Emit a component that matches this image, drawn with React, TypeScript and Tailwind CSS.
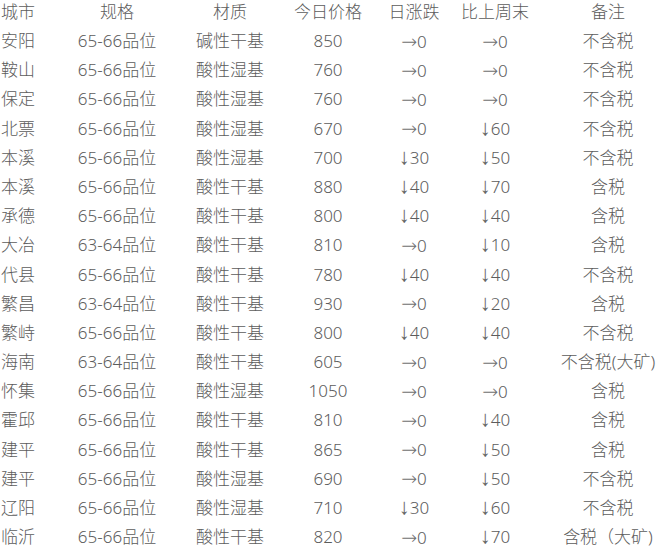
import React from "react";

type Row = [string, string, string, string, string, string, string];

const rows: Row[] = [
  ["城市", "规格", "材质", "今日价格", "日涨跌", "比上周末", "备注"],
  ["安阳", "65-66品位", "碱性干基", "850", "→0", "→0", "不含税"],
  ["鞍山", "65-66品位", "酸性湿基", "760", "→0", "→0", "不含税"],
  ["保定", "65-66品位", "酸性湿基", "760", "→0", "→0", "不含税"],
  ["北票", "65-66品位", "酸性湿基", "670", "→0", "↓60", "不含税"],
  ["本溪", "65-66品位", "酸性湿基", "700", "↓30", "↓50", "不含税"],
  ["本溪", "65-66品位", "酸性干基", "880", "↓40", "↓70", "含税"],
  ["承德", "65-66品位", "酸性干基", "800", "↓40", "↓40", "含税"],
  ["大冶", "63-64品位", "酸性干基", "810", "→0", "↓10", "含税"],
  ["代县", "65-66品位", "酸性干基", "780", "↓40", "↓40", "不含税"],
  ["繁昌", "63-64品位", "酸性干基", "930", "→0", "↓20", "含税"],
  ["繁峙", "65-66品位", "酸性干基", "800", "↓40", "↓40", "不含税"],
  ["海南", "63-64品位", "酸性干基", "605", "→0", "→0", "不含税(大矿)"],
  ["怀集", "65-66品位", "酸性湿基", "1050", "→0", "→0", "含税"],
  ["霍邱", "65-66品位", "酸性干基", "810", "→0", "↓40", "含税"],
  ["建平", "65-66品位", "酸性干基", "865", "→0", "↓50", "含税"],
  ["建平", "65-66品位", "酸性湿基", "690", "→0", "↓50", "不含税"],
  ["辽阳", "65-66品位", "酸性湿基", "710", "↓30", "↓60", "不含税"],
  ["临沂", "65-66品位", "酸性干基", "820", "→0", "↓70", "含税（大矿)"],
];

function Change({ v }: { v: string }) {
  const arrow = v[0];
  const rest = v.slice(1);
  return (
    <span className="whitespace-nowrap">
      {arrow === "→" ? (
        <span className="font-['DejaVu_Sans'] text-[19px] text-[#707070]">→</span>
      ) : (
        <span className="font-['Liberation_Sans'] text-[22px] leading-none text-[#666]">↓</span>
      )}
      {rest}
    </span>
  );
}

export default function App() {
  return (
    <div className="w-[660px] h-[555px] overflow-hidden bg-white text-[#5c5c5c] text-[17px] font-light font-['Noto_Sans','Noto_Sans_CJK_SC',sans-serif]">
      <div className="-mt-[3px]">
        {rows.map((r, i) => (
          <div
            key={i}
            className="grid grid-cols-[38px_158px_68px_128px_44px_118px_108px] h-[29.2px] items-center whitespace-nowrap"
          >
            <div className="flex justify-start pl-[1px]">{r[0]}</div>
            <div className="flex justify-center">{r[1]}</div>
            <div className="flex justify-center">{r[2]}</div>
            <div className="flex justify-center">{r[3]}</div>
            <div className="flex justify-center">
              {i === 0 ? r[4] : <Change v={r[4]} />}
            </div>
            <div className="flex justify-center">
              {i === 0 ? r[5] : <Change v={r[5]} />}
            </div>
            <div className="flex justify-center">{r[6]}</div>
          </div>
        ))}
      </div>
    </div>
  );
}
